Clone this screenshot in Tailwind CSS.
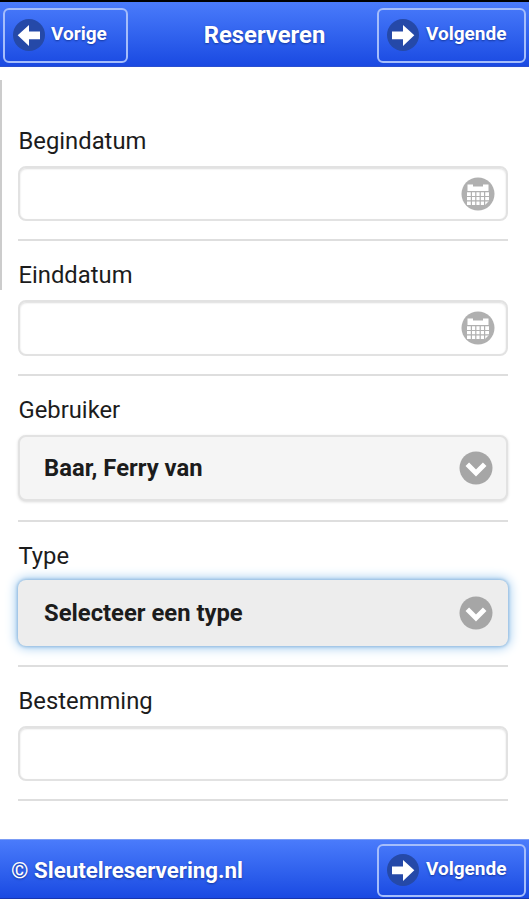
<!DOCTYPE html>
<html lang="nl">
<head>
<meta charset="utf-8">
<title>Reserveren</title>
<script src="https://cdn.jsdelivr.net/npm/@tailwindcss/browser@4"></script>
</head>
<body class="bg-white">
<svg class="hidden">
  <defs>
    <symbol id="right" viewBox="0 0 32 32"><circle cx="16" cy="16" r="16" fill="#2549a8"/><path d="M5 12.500H16V6l11.300 10.300L16 27v-6.800H5z" fill="#fff"/></symbol>
    <symbol id="cal" viewBox="0 0 34 34"><circle cx="17" cy="17" r="16.500" fill="#b0b0b0"/><path d="M6.500 7.500h5.500v2h10v-2h5.500V14h-21z" fill="#fff"/><path d="M6 15.300h22V24l-4 4H6z" fill="#fff"/><path d="M6 19.500h22M6 23.800h22M10.400 15v13M14.800 15v13M19.200 15v13M23.600 15v13" stroke="#b0b0b0" stroke-width="1.200"/></symbol>
    <symbol id="down" viewBox="0 0 34 34"><circle cx="17" cy="17" r="16.500" fill="#a6a6a6"/><path d="M8.300 13.300l8.700 8.700 8.700-8.700" fill="none" stroke="#fff" stroke-width="5"/></symbol>
  </defs>
</svg>
<div class="relative flex h-[900px] w-[529px] flex-col overflow-hidden bg-white font-['Roboto',sans-serif] text-[#1c1c1c]">
  <header class="grid h-[67px] shrink-0 grid-cols-[149px_1fr_149px] items-start border-t-2 border-b border-t-black border-b-[#2a4fd0] bg-linear-to-b from-[#4a7bfb] to-[#1a49e2] pt-[6px] pr-[3px] pl-[3px] font-bold text-white">
    <button class="flex h-[55px] w-[125px] items-center rounded-[6px] border-2 border-[#a5bdfb] pl-[8px] text-[19px]">
      <svg class="-mt-[2px] h-8 w-8 -scale-x-100"><use href="#right"/></svg>
      <span class="-mt-[3px] ml-[6px] [text-shadow:0_1px_2px_#16389f]">Vorige</span>
    </button>
    <h1 class="mt-[12px] text-center text-[23.800px] leading-[30px] [text-shadow:0_1px_2px_#16389f]">Reserveren</h1>
    <button class="flex h-[55px] w-[149px] items-center rounded-[6px] border-2 border-[#a5bdfb] pl-[8px] text-[19px]">
      <svg class="-mt-[2px] h-8 w-8"><use href="#right"/></svg>
      <span class="-mt-[3px] ml-[7px] [text-shadow:0_1px_2px_#16389f]">Volgende</span>
    </button>
  </header>
  <main class="flex grow flex-col pt-[40px] pr-[21px] pl-[18px] text-[23.800px] leading-7">
    <section class="h-[134px] border-b-2 border-[#dedede] pt-[20px]">
      <label class="block h-7 pl-[0.5px]">Begindatum</label>
      <div class="mt-[11px] flex h-[55px] items-center justify-end rounded-[8px] border-2 border-[#e2e2e2] pr-[11px] shadow-[inset_0_1px_2px_rgba(0,0,0,0.14)]"><svg class="h-[34px] w-[34px]"><use href="#cal"/></svg></div>
    </section>
    <section class="h-[135px] border-b-2 border-[#dedede] pt-[20px]">
      <label class="block h-7 pl-[0.5px]">Einddatum</label>
      <div class="mt-[11px] flex h-[56px] items-center justify-end rounded-[8px] border-2 border-[#e2e2e2] pr-[11px] shadow-[inset_0_1px_2px_rgba(0,0,0,0.14)]"><svg class="h-[34px] w-[34px]"><use href="#cal"/></svg></div>
    </section>
    <section class="h-[146px] border-b-2 border-[#dedede] pt-[20px]">
      <label class="block h-7 pl-[0.5px]">Gebruiker</label>
      <div class="mt-[11px] flex h-[66px] items-center justify-between rounded-[8px] border-2 border-[#e2e2e2] bg-[#f5f5f5] pr-[13px] pl-[24px] font-bold shadow-[0_1px_3px_rgba(0,0,0,0.15)]"><span class="-mt-[1px]">Baar, Ferry van</span><svg class="h-[34px] w-[34px]"><use href="#down"/></svg></div>
    </section>
    <section class="h-[145px] border-b-2 border-[#dedede] pt-[20px]">
      <label class="block h-7 pl-[0.5px]">Type</label>
      <div class="mt-[10px] flex h-[66px] items-center justify-between rounded-[8px] bg-[#ededed] pr-[15px] pl-[26px] font-bold shadow-[0_0_3px_1px_#94bce0,0_0_11px_2px_#a3cdf0]"><span class="-mt-[1px]">Selecteer een type</span><svg class="h-[34px] w-[34px]"><use href="#down"/></svg></div>
    </section>
    <section class="h-[134px] border-b-2 border-[#dedede] pt-[20px]">
      <label class="block h-7 pl-[0.5px]">Bestemming</label>
      <div class="mt-[11px] h-[55px] rounded-[8px] border-2 border-[#e2e2e2] shadow-[inset_0_1px_2px_rgba(0,0,0,0.14)]"></div>
    </section>
  </main>
  <footer class="mb-px flex h-[60px] shrink-0 items-start justify-between border-y border-t-[#7b9cf5] border-b-[#1836b0] bg-linear-to-b from-[#4a7bfb] to-[#1a49e2] pt-[4px] pr-[3px] pl-[11px] font-bold text-white">
    <p class="mt-[12px] text-[22.300px] leading-[28px] [text-shadow:0_1px_2px_#16389f]">© Sleutelreservering.nl</p>
    <button class="flex h-[53px] w-[149px] items-center rounded-[6px] border-2 border-[#a5bdfb] pl-[8px] text-[19px]">
      <svg class="-mt-[2px] h-8 w-8"><use href="#right"/></svg>
      <span class="-mt-[3px] ml-[7px] [text-shadow:0_1px_2px_#16389f]">Volgende</span>
    </button>
  </footer>
  <div class="absolute top-[80px] left-0 h-[210px] w-[2px] bg-[#cccccc]"></div>
</div>
</body>
</html>
